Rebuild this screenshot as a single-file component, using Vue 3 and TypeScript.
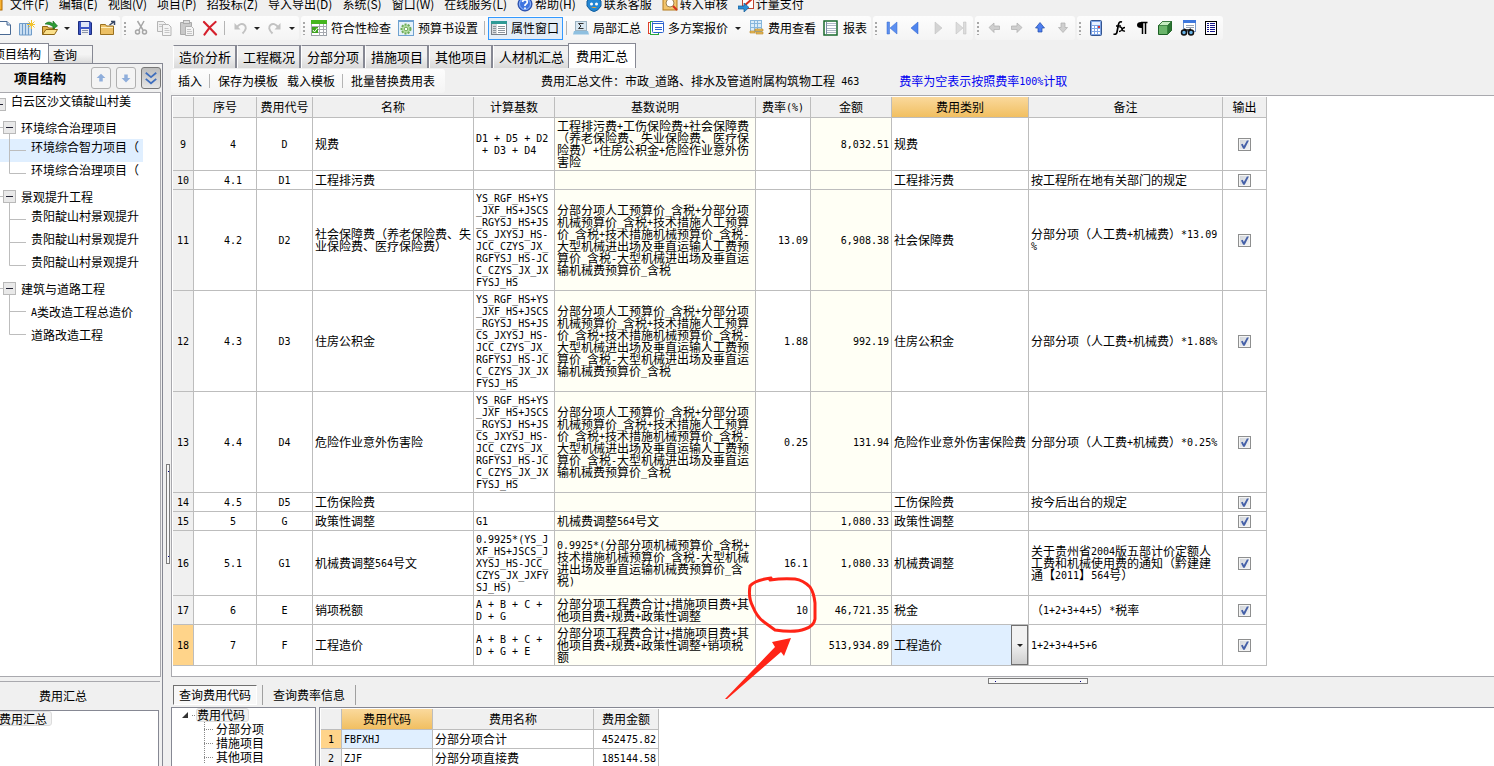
<script setup lang="ts">
import { h, ref } from 'vue'
import type { FunctionalComponent } from 'vue'

/* Splits a string so that ASCII runs take half the advance of a full-width character. */
const Mix: FunctionalComponent<{ text: string }> = (props) =>
  h(
    'span',
    { class: 'mix' },
    props.text
      .split(/([\x20-\x7e]+)/)
      .filter((part) => part.length > 0)
      .map((part) => (/^[\x20-\x7e]+$/.test(part) ? h('span', { class: 'half' }, part) : part)),
  )
Mix.props = ['text']

interface Tool {
  kind: 'icon' | 'text' | 'drop' | 'sep'
  icon?: string
  label?: string
  active?: boolean
}
interface CostRow {
  no: number
  serial: string
  code: string
  name: string
  base: string
  desc: string
  rate: string
  amount: string
  type: string
  note: string
  output: boolean
}

const icons: Record<string, string> = {
  app: '<rect x="1" y="1" width="13" height="13" fill="#f7b233" stroke="#b36b00"/>',
  page: '<path d="M3 1.500h8l3.500 3.500v9.500H3z" fill="#fff" stroke="#4a6a94"/><path d="M11 1.500V5h3.500" fill="#cfe0f5" stroke="#4a6a94"/>',
  notes:
    '<path d="M.5 3.500h12v11.500h-12z" fill="#c9def2" stroke="#6f9cc9"/><path d="M3.500 3v12M6.500 3v12M9.500 3v12" stroke="#6f9cc9"/><path d="M12.500 0v9M8 4.500h9M9.500 1.500l6 6M15.500 1.500l-6 6" stroke="#f3c32c"/>',
  open: '<path d="M.5 14.500V6.500h5l1 1.500h6v2" fill="#e3b14a" stroke="#8d6415"/><path d="M.5 14.500L4 9.500h11.500l-3 5z" fill="#fbe08b" stroke="#8d6415"/><path d="M3 4q4-4 8 0V1l4.500 5L11 9V6.500Q7 3.500 3 4z" fill="#2f9e38" stroke="#12661b" stroke-width=".6"/>',
  save: '<path d="M1.500 1.500h11.500l1.500 1.500v11.500h-13z" fill="#3b55c4" stroke="#1c2d80"/><rect x="4" y="2" width="8" height="5" fill="#dfe6f7"/><rect x="4" y="9" width="8" height="6" fill="#f0f0f0"/><path d="M5 10.500h6M5 12.500h6" stroke="#8a94ad"/>',
  folder:
    '<path d="M.5 14.500v-10h5l1 1.500h7v8.500z" fill="#ecc065" stroke="#9a7120"/><path d="M1 7.500h12" stroke="#fff0be"/><path d="M9.500 5l5-3.500M11 1.500h3.500V5" fill="none" stroke="#384866" stroke-width="1.500"/>',
  cut: '<path d="M4.500 1l5.500 9M11 1L6 10" stroke="#a6a6a6" stroke-width="1.500"/><circle cx="4.500" cy="12" r="2" fill="none" stroke="#a6a6a6" stroke-width="1.500"/><circle cx="11.500" cy="12" r="2" fill="none" stroke="#a6a6a6" stroke-width="1.500"/>',
  copy: '<path d="M1.500 1.500h6l2 2v8h-8z" fill="#f0f0f0" stroke="#b5b5b5"/><path d="M6.500 4.500h6l2.500 2.500v8.500H6.500z" fill="#f5f5f5" stroke="#b5b5b5"/><path d="M8.500 8.500h4M8.500 10.500h5M8.500 12.500h5M3 4.500h3M3 6.500h3" stroke="#c6c6c6"/>',
  paste:
    '<path d="M1.500 2.500h11v12h-11z" fill="#c9c9c9" stroke="#aaa"/><rect x="4.500" y=".5" width="6" height="3" fill="#ddd" stroke="#aaa"/><path d="M6.500 6.500h6l2 2v7h-8z" fill="#f5f5f5" stroke="#b0b0b0"/><path d="M8 9.500h4M8 11.500h5M8 13.500h5" stroke="#c6c6c6"/>',
  del: '<path d="M2 2q6 6 12 12.500M13.500 2Q7 7 2.500 14.500" fill="none" stroke="#d5202c" stroke-width="2.200" stroke-linecap="round"/>',
  undo: '<path d="M4.500 7.500Q9 2 12.500 5t-2 8.500" fill="none" stroke="#c2c2c2" stroke-width="2"/><path d="M2.500 3v6.500h6z" fill="#c2c2c2"/>',
  redo: '<path d="M11.500 7.500Q7 2 3.500 5t2 8.500" fill="none" stroke="#c2c2c2" stroke-width="2"/><path d="M13.500 3v6.500h-6z" fill="#c2c2c2"/>',
  check:
    '<rect x=".5" y=".5" width="15" height="15" fill="#fff" stroke="#9aa0a6"/><rect x="0" y="0" width="16" height="4" fill="#45b51f"/><path d="M0 6.500h16M0 9.500h16M0 12.500h16M8.500 4v12M12.500 4v12" stroke="#a7aab0"/><rect x="1" y="7" width="6" height="6" fill="#3fa41f"/><path d="M2 10l1.500 2L6.500 8" fill="none" stroke="#fff"/>',
  gear: '<rect x=".5" y=".5" width="15" height="15" fill="#e5f2fb" stroke="#6fa2d0"/><path d="M0 1.500h16" stroke="#6fa2d0"/><circle cx="8" cy="9" r="4.500" fill="#b9dfa8" stroke="#6cab57" stroke-width="2" stroke-dasharray="2 1.200"/><circle cx="8" cy="9" r="1.800" fill="#fff" stroke="#6cab57"/>',
  props:
    '<rect x=".5" y="1.500" width="15" height="13" fill="#fff" stroke="#7a8087"/><path d="M0 2.500h16" stroke="#2e9a96" stroke-width="3"/><rect x="1" y="4" width="5" height="10" fill="#d5d8db"/><path d="M2 6.500h3M2 8.500h3M2 10.500h3M2 12.500h3M7 6.500h7M7 8.500h7M7 10.500h7M7 12.500h7" stroke="#8b949c"/>',
  sigma:
    '<rect x="2.500" y="1.500" width="11" height="9" fill="#d7e6f0" stroke="#9cb3c2"/><path d="M10.500 3.500h-5l2.500 2.500-2.500 2.500h5" fill="none" stroke="#333"/><path d="M1 11h14l1 3.500H0z" fill="#8fc0e0"/>',
  multi:
    '<rect x=".5" y="2.500" width="6" height="11" fill="#fff" stroke="#e0402b"/><rect x="2.500" y="1.500" width="8" height="13" fill="#fff" stroke="#2ca73b"/><rect x="4.500" y="1.500" width="11" height="11" rx="1" fill="#fff" stroke="#2b62cf"/><path d="M5 3.500h10M7 7.500h7M7 9.500h7" stroke="#2b62cf"/>',
  cost: '<rect x="2.500" y=".5" width="11" height="11" fill="#d9ecf8" stroke="#86b6dc"/><path d="M3 3.500h10M3 7.500h10M6.500 1v10M9.500 1v10" stroke="#86b6dc"/><path d="M7 9h8v2H7zM8 12h7v2H8zM2 11h5v2H2z" fill="#e9bd5c" stroke="#b98827" stroke-width=".6"/>',
  report:
    '<rect x="1" y="1" width="13" height="14" fill="#fff" stroke="#1a6a2e" stroke-width="1.500"/><path d="M4 3.500h9M4 5.500h9M4 8.500h9M4 10.500h9M4 12.500h9" stroke="#aeb8c6"/><path d="M3.500 2v12" stroke="#7c8ea8"/>',
  first: '<path d="M3 2h2.500v12H3zM13 2v12L6 8z" fill="#5c8ff0" stroke="#3568cc" stroke-width=".5"/>',
  prev: '<path d="M11 2v12L4 8z" fill="#4f85ee" stroke="#2b5fc9" stroke-width=".5"/>',
  next: '<path d="M5 2v12l7-6z" fill="#d4d4d4" stroke="#bdbdbd" stroke-width=".5"/>',
  last: '<path d="M10.500 2H13v12h-2.500zM3 2v12l7-6z" fill="#dcdcdc" stroke="#bdbdbd" stroke-width=".5"/>',
  left: '<path d="M3 7.500L8 3v3h5.500v3.500H8v3z" fill="#cfcfcf" stroke="#adadad" stroke-width=".7"/>',
  right: '<path d="M13 7.500L8 3v3H2.500v3.500H8v3z" fill="#cfcfcf" stroke="#adadad" stroke-width=".7"/>',
  up: '<path d="M8 2.500L12.500 8H10v4H6V8H3.500z" fill="#4e7ff0" stroke="#1f4aa8" stroke-width=".7"/>',
  down: '<path d="M8 12.500L12.500 7.500H10V3H6v4.500H3.500z" fill="#cfcfcf" stroke="#adadad" stroke-width=".7"/>',
  calc: '<rect x="2.500" y=".5" width="11" height="15" rx="1" fill="#7fa5e6" stroke="#35548e"/><rect x="4" y="2" width="8" height="3" fill="#e8f0ff"/><path d="M4 7h8M4 10h8M4 13h8" stroke="#fff" stroke-width="2" stroke-dasharray="2 1"/><path d="M10 7h2" stroke="#d33" stroke-width="2"/>',
  fx: '<path d="M11 2Q8 1 7.500 4.500L6 12q-.5 3-3.500 2M5 6h5" fill="none" stroke="#000" stroke-width="1.700"/><path d="M8.500 7.500q2-1 2.500 1.500t3 2M14 7.500q-2 0-3 2t-3 2" fill="none" stroke="#000" stroke-width="1.300"/>',
  para: '<path d="M7 2.500h6.500M8.500 2.500v11.500M11.500 2.500v11.500" stroke="#000" stroke-width="1.500"/><path d="M9 2H7Q3 2 3 5t4 3h2z" fill="#000"/>',
  cube: '<path d="M1.500 5.500l4-4h9v9l-4 4h-9z" fill="#3f9a45" stroke="#1c5f24"/><path d="M1.500 5.500l4-4h9l-4 4z" fill="#c5ecc0" stroke="#1c5f24" stroke-width=".6"/><path d="M10.500 5.500l4-4v9l-4 4z" fill="#2c7433"/><path d="M2 6h8v8H2z" fill="#6bb56b"/>',
  find: '<rect x="3.500" y=".5" width="12" height="11" fill="#fff" stroke="#7a9ac8"/><path d="M3 1.500h13" stroke="#3e78dd" stroke-width="3"/><path d="M6 5.500h8M6 7.500h8" stroke="#9aa6b5"/><circle cx="4" cy="12.500" r="2.500" fill="#67b4e8" stroke="#111" stroke-width="1.500"/><circle cx="11" cy="12.500" r="2.500" fill="#67b4e8" stroke="#111" stroke-width="1.500"/><path d="M4 9l2 1h3l2-1" fill="none" stroke="#111" stroke-width="1.500"/>',
  list: '<rect x="2.500" y="1.500" width="11" height="13" fill="#fff" stroke="#000"/><path d="M4 3.500h2M4 5.500h2M4 7.500h2M4 9.500h2M4 11.500h2M7 3.500h5M7 5.500h5M7 7.500h5M7 9.500h5M7 11.500h5" stroke="#15158a"/>',
  help: '<circle cx="8" cy="8" r="7" fill="#3f74e0" stroke="#1c3f9c"/><circle cx="8" cy="8" r="5.500" fill="none" stroke="#a8c5ff" stroke-width=".8"/><path d="M5.500 6Q6 3.500 8.500 4t1.500 3L8 9v1M8 11.500V13" fill="none" stroke="#fff" stroke-width="1.700"/>',
  service:
    '<path d="M1 5q7-8 14 0v5q-7 11-14 0z" fill="#2386d4" stroke="#125f9e"/><circle cx="5.500" cy="8" r="1.500" fill="#fff"/><circle cx="10.500" cy="8" r="1.500" fill="#fff"/><path d="M5 11q3 2 6 0z" fill="#f6a623"/>',
  audit:
    '<rect x="1" y="2" width="14" height="12" fill="#f2c46c" stroke="#b37a1c"/><circle cx="8" cy="7" r="4" fill="#fff" stroke="#9d8453"/><path d="M11 10l4 4" stroke="#d5301e" stroke-width="2"/>',
  pay: '<rect x="4.500" y="1.500" width="11" height="11" fill="#fff" stroke="#c04430"/><path d="M6 10l8-7" stroke="#d5301e" stroke-width="2"/><path d="M0 10h6V7l5 4.500L6 16v-3H0z" fill="#2d8fd6" stroke="#155a94" stroke-width=".7"/>',
}

const menus: { label: string; icon?: string }[] = [
  { label: '文件(F)' },
  { label: '编辑(E)' },
  { label: '视图(V)' },
  { label: '项目(P)' },
  { label: '招投标(Z)' },
  { label: '导入导出(D)' },
  { label: '系统(S)' },
  { label: '窗口(W)' },
  { label: '在线服务(L)' },
  { label: '帮助(H)', icon: 'help' },
  { label: '联系客服', icon: 'service' },
  { label: '转入审核', icon: 'audit' },
  { label: '计量支付', icon: 'pay' },
]

const ic = (icon: string, label: string): Tool => ({ kind: 'icon', icon, label })
const tx = (icon: string, label: string, active = false): Tool => ({ kind: 'text', icon, label, active })
const drop = (label: string): Tool => ({ kind: 'drop', label })
const sep: Tool = { kind: 'sep' }

const toolGroups: { wide?: boolean; tools: Tool[] }[] = [
  { tools: [ic('page', '新建'), ic('notes', '新建项目'), ic('open', '打开'), drop('打开选项'), ic('save', '保存'), ic('folder', '另存')] },
  { tools: [ic('cut', '剪切'), ic('copy', '复制'), ic('paste', '粘贴'), ic('del', '删除'), sep, ic('undo', '撤销'), drop('撤销选项'), ic('redo', '重做'), drop('重做选项')] },
  {
    wide: true,
    tools: [tx('check', '符合性检查'), tx('gear', '预算书设置'), sep, tx('props', '属性窗口', true), sep, tx('sigma', '局部汇总'), tx('multi', '多方案报价'), drop('报价选项'), tx('cost', '费用查看'), tx('report', '报表')],
  },
  { tools: [ic('first', '首条'), ic('prev', '上一条'), ic('next', '下一条'), ic('last', '末条')] },
  { tools: [ic('left', '左移'), ic('right', '右移'), ic('up', '上移'), ic('down', '下移')] },
  { tools: [ic('calc', '计算器'), ic('fx', '函数'), ic('para', '段落'), ic('cube', '模型'), ic('find', '查找'), ic('list', '清单')] },
]

const tree: { level: 0 | 1 | 2; text: string; high?: boolean; last?: boolean; selected?: boolean }[] = [
  { level: 0, text: '白云区沙文镇靛山村美', high: true },
  { level: 1, text: '环境综合治理项目' },
  { level: 2, text: '环境综合智力项目（', high: true, selected: true },
  { level: 2, text: '环境综合治理项目（', high: true, last: true },
  { level: 1, text: '景观提升工程' },
  { level: 2, text: '贵阳靛山村景观提升', high: true },
  { level: 2, text: '贵阳靛山村景观提升', high: true },
  { level: 2, text: '贵阳靛山村景观提升', high: true, last: true },
  { level: 1, text: '建筑与道路工程' },
  { level: 2, text: 'A类改造工程总造价' },
  { level: 2, text: '道路改造工程', last: true },
]

const mainTabs = ['造价分析', '工程概况', '分部分项', '措施项目', '其他项目', '人材机汇总', '费用汇总']
const currentTab = ref('费用汇总')

const headers = ['', '序号', '费用代号', '名称', '计算基数', '基数说明', '费率(%)', '金额', '费用类别', '备注', '输出']

const formula = 'YS_RGF_HS+YS\n_JXF_HS+JSCS\n_RGYSJ_HS+JS\nCS_JXYSJ_HS-\nJCC_CZYS_JX_\nRGFYSJ_HS-JC\nC_CZYS_JX_JX\nFYSJ_HS'
const formulaDesc =
  '分部分项人工预算价_含税+分部分项\n机械预算价_含税+技术措施人工预算\n价_含税+技术措施机械预算价_含税-\n大型机械进出场及垂直运输人工费预\n算价_含税-大型机械进出场及垂直运\n输机械费预算价_含税'

const row = (
  no: number, serial: string, code: string, name: string, base: string, desc: string,
  rate: string, amount: string, type: string, note: string,
): CostRow => ({ no, serial, code, name, base, desc, rate, amount, type, note, output: true })

const rows = ref<CostRow[]>([
  row(9, '4', 'D', '规费', 'D1 + D5 + D2\n + D3 + D4', '工程排污费+工伤保险费+社会保障费\n（养老保险费、失业保险费、医疗保\n险费）+住房公积金+危险作业意外伤\n害险', '', '8,032.51', '规费', ''),
  row(10, '4.1', 'D1', '工程排污费', '', '', '', '', '工程排污费', '按工程所在地有关部门的规定'),
  row(11, '4.2', 'D2', '社会保障费（养老保险费、失\n业保险费、医疗保险费）', formula, formulaDesc, '13.09', '6,908.38', '社会保障费', '分部分项（人工费+机械费）*13.09\n%'),
  row(12, '4.3', 'D3', '住房公积金', formula, formulaDesc, '1.88', '992.19', '住房公积金', '分部分项（人工费+机械费）*1.88%'),
  row(13, '4.4', 'D4', '危险作业意外伤害险', formula, formulaDesc, '0.25', '131.94', '危险作业意外伤害保险费', '分部分项（人工费+机械费）*0.25%'),
  row(14, '4.5', 'D5', '工伤保险费', '', '', '', '', '工伤保险费', '按今后出台的规定'),
  row(15, '5', 'G', '政策性调整', 'G1', '机械费调整564号文', '', '1,080.33', '政策性调整', ''),
  row(16, '5.1', 'G1', '机械费调整564号文', '0.9925*(YS_J\nXF_HS+JSCS_J\nXYSJ_HS-JCC_\nCZYS_JX_JXFY\nSJ_HS)', '0.9925*(分部分项机械预算价_含税+\n技术措施机械预算价_含税-大型机械\n进出场及垂直运输机械费预算价_含\n税)', '16.1', '1,080.33', '机械费调整', '关于贵州省2004版五部计价定额人\n工费和机械使用费的通知（黔建建\n通【2011】564号）'),
  row(17, '6', 'E', '销项税额', 'A + B + C +\nD + G', '分部分项工程费合计+措施项目费+其\n他项目费+规费+政策性调整', '10', '46,721.35', '税金', '（1+2+3+4+5）*税率'),
  row(18, '7', 'F', '工程造价', 'A + B + C +\nD + G + E', '分部分项工程费合计+措施项目费+其\n他项目费+规费+政策性调整+销项税\n额', '', '513,934.89', '工程造价', '1+2+3+4+5+6'),
])
const selectedNo = 18

const codes = [
  { no: 1, code: 'FBFXHJ', name: '分部分项合计', amount: '452475.82' },
  { no: 2, code: 'ZJF', name: '分部分项直接费', amount: '185144.58' },
]
</script>

<template>
  <div class="app">
    <nav class="menu">
      <svg class="ico app-ico" viewBox="0 0 16 16" v-html="icons.app" />
      <button v-for="m in menus" :key="m.label" type="button">
        <svg v-if="m.icon" class="ico" viewBox="0 0 16 16" v-html="icons[m.icon]" />
        <span>{{ m.label }}</span>
      </button>
    </nav>

    <div class="toolbar">
      <div v-for="(group, gi) in toolGroups" :key="gi" :class="['group', { wide: group.wide }]">
        <span v-if="gi > 0" class="grip" />
        <template v-for="(t, ti) in group.tools" :key="ti">
          <span v-if="t.kind === 'sep'" class="sep" />
          <button v-else-if="t.kind === 'drop'" type="button" class="drop" :aria-label="t.label" />
          <button v-else type="button" :class="[t.kind, { active: t.active }]" :aria-label="t.label">
            <svg class="ico" viewBox="0 0 16 16" v-html="icons[t.icon ?? '']" />
            <span v-if="t.kind === 'text'">{{ t.label }}</span>
          </button>
        </template>
      </div>
    </div>

    <div class="body">
      <aside class="left">
        <div class="side-tabs">
          <button type="button" class="on">项目结构</button>
          <button type="button">查询</button>
        </div>
        <div class="side-main">
          <header class="side-head">
            <strong>项目结构</strong>
            <button type="button" aria-label="上移"><svg viewBox="0 0 16 16"><path d="M8 3l5 5h-3v4H6V8H3z" fill="#8faedb" /></svg></button>
            <button type="button" aria-label="下移"><svg viewBox="0 0 16 16"><path d="M8 13L3 8h3V4h4v4h3z" fill="#8faedb" /></svg></button>
            <button type="button" class="dark" aria-label="全部展开"><svg viewBox="0 0 16 16"><path d="M2 2l6 5 6-5M2 9l6 5 6-5" fill="none" stroke="#3f6ebd" stroke-width="2" /></svg></button>
          </header>
          <ul class="tree">
            <li v-for="(n, i) in tree" :key="i" :class="{ high: n.high, selected: n.selected }">
              <svg v-if="n.level === 2" width="29" height="23" viewBox="0 0 29 23">
                <path :d="n.last ? 'M9.500 0V11.500H26' : 'M9.500 0V23M9.500 11.500H26'" fill="none" stroke="#bdbdbd" />
              </svg>
              <svg v-else-if="n.level === 1" width="19" height="23" viewBox="0 0 19 23">
                <path d="M0 11.500H3M9.500 18V23" stroke="#bdbdbd" />
                <rect x="3.500" y="5.500" width="12" height="12" fill="#e9e9e9" stroke="#b9b9b9" />
                <path d="M6 11.500h7" stroke="#223" />
              </svg>
              <svg v-else width="9" height="23" viewBox="0 0 9 23">
                <rect x="-6.500" y="5.500" width="12" height="12" fill="#e9e9e9" stroke="#b9b9b9" />
                <path d="M-4 11.500h7" stroke="#223" />
              </svg>
              <Mix :text="n.text" />
            </li>
          </ul>
        </div>
        <div class="side-bottom">
          <h2>费用汇总</h2>
          <div class="side-list"><button type="button">费用汇总</button></div>
        </div>
      </aside>

      <div class="vsplit"><span /></div>

      <main class="right">
        <div class="tabs">
          <button v-for="t in mainTabs" :key="t" type="button" :class="{ on: t === currentTab }" @click="currentTab = t">{{ t }}</button>
        </div>
        <div class="subbar">
          <div class="sub-actions">
            <button type="button">插入</button>
            <span class="sep" />
            <button type="button">保存为模板</button>
            <button type="button">载入模板</button>
            <span class="sep" />
            <button type="button">批量替换费用表</button>
          </div>
          <Mix class="file" text="费用汇总文件：市政_道路、排水及管道附属构筑物工程 463" />
          <Mix class="hint" text="费率为空表示按照费率100%计取" />
        </div>

        <section class="grid-panel">
          <table class="grid">
            <colgroup>
              <col v-for="n in 11" :key="n" :class="'c' + n" />
            </colgroup>
            <thead>
              <tr>
                <th v-for="(t, i) in headers" :key="i" :class="{ hot: i === 8 }"><Mix :text="t" /></th>
              </tr>
            </thead>
            <tbody>
              <tr v-for="r in rows" :key="r.no">
                <th :class="{ current: r.no === selectedNo }"><Mix :text="String(r.no)" /></th>
                <td class="center serial"><Mix :text="r.serial" /></td>
                <td class="center"><Mix :text="r.code" /></td>
                <td><Mix :text="r.name" /></td>
                <td><Mix :text="r.base" /></td>
                <td class="cream"><Mix :text="r.desc" /></td>
                <td class="num"><Mix :text="r.rate" /></td>
                <td class="num cream"><Mix :text="r.amount" /></td>
                <td v-if="r.no === selectedNo" class="combo-cell">
                  <div class="combo">
                    <select v-model="r.type" aria-label="费用类别">
                      <option>工程造价</option>
                      <option>税金</option>
                    </select>
                    <span class="combo-btn" />
                  </div>
                </td>
                <td v-else><Mix :text="r.type" /></td>
                <td><Mix :text="r.note" /></td>
                <td class="center"><input v-model="r.output" type="checkbox" :aria-label="'输出 ' + r.name" /></td>
              </tr>
            </tbody>
          </table>
        </section>

        <div class="hsplit"><span /></div>

        <div class="lower-tabs">
          <button type="button" class="on">查询费用代码</button>
          <button type="button">查询费率信息</button>
        </div>
        <div class="lower">
          <div class="code-tree">
            <div class="code-root">
              <svg width="24" height="14" viewBox="0 0 24 14"><path d="M16 4v6h-6z" fill="#333" /><path d="M20 7.500h4" stroke="#888" stroke-dasharray="1 1" /></svg>
              <button type="button">费用代码</button>
            </div>
            <div v-for="t in ['分部分项', '措施项目', '其他项目']" :key="t" class="code-leaf">
              <svg width="10" height="14" viewBox="0 0 10 14"><path d="M.5 0V14M0 7.500H9" stroke="#888" stroke-dasharray="1 1" /></svg>
              <span>{{ t }}</span>
            </div>
          </div>
          <div class="code-grid">
            <table class="grid">
              <colgroup><col class="c1" /><col class="k2" /><col class="k3" /><col class="k4" /></colgroup>
              <thead>
                <tr><th /><th class="hot">费用代码</th><th>费用名称</th><th>费用金额</th></tr>
              </thead>
              <tbody>
                <tr v-for="c in codes" :key="c.no">
                  <th :class="{ current: c.no === 1 }"><Mix :text="String(c.no)" /></th>
                  <td :class="{ picked: c.no === 1 }"><Mix :text="c.code" /></td>
                  <td><Mix :text="c.name" /></td>
                  <td class="num"><Mix :text="c.amount" /></td>
                </tr>
              </tbody>
            </table>
          </div>
        </div>
      </main>
    </div>

    <svg class="marks" width="100" height="130" viewBox="0 0 100 130" aria-hidden="true">
      <path d="M30 7Q14 9 9 15Q7 27 12 36Q16 46 23 51L34 59Q54 62 64 58Q73 55 74 48V32Q73 22 69 16Q62 9 54 8Q42 7 29 9" fill="none" stroke="#ff2416" stroke-width="3" stroke-linecap="round" stroke-linejoin="round" />
      <path d="M-16 128L34 76L31 71L50 67L43 85L40 81L-14 128Z" fill="#ff2416" />
    </svg>
  </div>
</template>

<style>
html,
body {
  background: #f0f0f0;
}
.mix {
  white-space: pre;
}
.mix .half {
  font-family: 'DejaVu Sans Mono', 'Liberation Mono', monospace;
  font-size: 10px;
  line-height: 0;
  vertical-align: 1px;
}
</style>

<style scoped>
.app {
  position: relative;
  display: flex;
  flex-direction: column;
  height: 100vh;
  overflow: hidden;
  background: #f0f0f0;
  color: #000;
  font: 12px/12px 'Noto Sans CJK SC', sans-serif;
}
.app * {
  box-sizing: border-box;
}
button,
select {
  margin: 0;
  padding: 0;
  border: 0;
  background: none;
  color: inherit;
  font: inherit;
  white-space: nowrap;
}
.ico {
  width: 16px;
  height: 16px;
  flex: none;
}

/* menu */
.menu {
  display: flex;
  align-items: center;
  gap: 10px;
  height: 24px;
  margin: -8px 0 0 -12px;
  flex: none;
}
.menu .app-ico {
  margin-right: -4px;
}
.menu button {
  display: flex;
  align-items: center;
  gap: 2px;
}

/* toolbar */
.toolbar {
  display: flex;
  gap: 2px;
  height: 26px;
  margin-left: -8px;
  flex: none;
}
.group {
  display: flex;
  align-items: center;
  height: 24px;
  padding-right: 1px;
  border-radius: 3px;
  background: linear-gradient(#fdfdfd, #f4f4f4);
}
.group.wide {
  gap: 1px;
}
.grip {
  width: 7px;
  height: 14px;
  background: radial-gradient(circle at 3px 2px, #a8a8a8 1px, transparent 1px) 0 0 / 7px 4px;
}
.wide .grip {
  margin-right: -1px;
}
.sep {
  width: 1px;
  height: 14px;
  margin: 0 3px;
  background: #b4b4b4;
}
.wide .sep {
  margin: 0 2px;
}
.icon {
  display: flex;
  justify-content: center;
  width: 23px;
}
.text {
  display: flex;
  align-items: center;
  gap: 4px;
  height: 23px;
  padding: 0 3px;
}
.text.active {
  padding: 0 3px 0 2px;
  border: 1px solid #3399ff;
  background: #e4eef8;
}
.drop {
  display: flex;
  justify-content: center;
  width: 12px;
}
.drop::before,
.combo-btn::before {
  content: '';
  border: 3px solid transparent;
  border-top-color: #222;
  border-bottom: 0;
}

/* body */
.body {
  display: grid;
  grid-template-columns: 163px 8px minmax(0, 1fr);
  flex: 1;
  min-height: 0;
}
.left {
  display: flex;
  flex-direction: column;
  min-height: 0;
  overflow: hidden;
}
.side-tabs {
  display: flex;
  align-items: flex-end;
  height: 21px;
  flex: none;
}
.side-tabs button {
  width: 44px;
  height: 18px;
  padding-left: 4px;
  border: 1px solid #868893;
  border-width: 1px 1px 0 0;
  background: linear-gradient(#f4f4f4 50%, #dcdcdc);
  text-align: left;
}
.side-tabs .on {
  display: flex;
  justify-content: flex-end;
  align-items: center;
  width: 49px;
  height: 20px;
  padding: 0 7px 0 0;
  background: #fff;
}
.side-main {
  display: flex;
  flex-direction: column;
  flex: 1;
  min-height: 0;
  padding-right: 1px;
  border-top: 1px solid #868893;
  border-right: 1px solid #868893;
}
.side-head {
  display: flex;
  align-items: center;
  gap: 5px;
  height: 28px;
  flex: none;
}
.side-head strong {
  flex: 1;
  padding-left: 14px;
  font-size: 13px;
}
.side-head button {
  display: grid;
  place-items: center;
  width: 20px;
  height: 22px;
  border: 1px solid #b0b0b0;
  border-radius: 3px;
  background: #f4f4f4;
}
.side-head svg {
  width: 14px;
  height: 16px;
}
.side-head .dark {
  border-color: #777;
  background: linear-gradient(#bcbcbc, #e6e6e6);
}
.tree {
  flex: 1;
  min-height: 0;
  margin: 0;
  padding: 0;
  list-style: none;
  border: 1px solid #a9a9ae;
  border-left: 0;
  background: #fff;
}
.tree li {
  display: flex;
  align-items: center;
  gap: 2px;
  width: 143px;
  height: 23px;
}
.tree svg {
  flex: none;
}
.tree .high .mix {
  padding-bottom: 7px;
}
.tree .selected {
  background: #e0efff;
}
.side-bottom {
  display: flex;
  flex-direction: column;
  height: 89px;
  padding-top: 4px;
  flex: none;
  border-right: 1px solid #868893;
}
.side-bottom h2 {
  height: 29px;
  margin: 0 2px 0 0;
  padding-left: 39px;
  border-top: 1px solid #a9a9ae;
  font-size: 12px;
  font-weight: 400;
  line-height: 28px;
}
.side-list {
  flex: 1;
  margin-right: 3px;
  border: 1px solid #868893;
  border-width: 1px 1px 0 0;
  background: #fff;
}
.side-list button {
  height: 15px;
  margin-left: -2px;
  padding-right: 4px;
  border: 1px solid #dcdcdc;
  border-radius: 3px;
  background: #f1f1f1;
}
.vsplit {
  display: flex;
  align-items: flex-start;
  padding: 422px 0 0 3px;
}
.vsplit span,
.hsplit span {
  display: flex;
  justify-content: space-between;
  align-items: flex-end;
  padding: 6px 0;
  width: 4px;
  height: 100px;
  border: 1px solid #7c7c7c;
  background: #f8f8f8;
}
.vsplit span {
  flex-direction: column;
}
.vsplit span::before,
.vsplit span::after,
.hsplit span::before,
.hsplit span::after {
  content: '';
  width: 1px;
  height: 1px;
  background: #000080;
}

/* right */
.right {
  display: flex;
  flex-direction: column;
  min-width: 0;
  min-height: 0;
}
.tabs {
  display: flex;
  align-items: flex-end;
  height: 26px;
  padding-left: 2px;
  flex: none;
}
.tabs button {
  height: 23px;
  padding: 0 4px 0 5px;
  border: solid #868893;
  border-width: 1px 2px 0 0;
  border-left: 1px solid #fff;
  background: linear-gradient(#f0f0f0 45%, #d9d9d9);
  font-size: 13px;
}
.tabs .on {
  height: 25px;
  margin-left: -2px;
  padding: 0 7px;
  border: 1px solid #868893;
  border-bottom: 0;
  background: #fff;
}
.subbar {
  display: flex;
  align-items: center;
  height: 27px;
  padding-bottom: 1px;
  flex: none;
}
.sub-actions {
  display: flex;
  align-items: center;
  height: 24px;
  padding: 0 6px 0 2px;
  border-radius: 3px;
  background: linear-gradient(#fdfdfd, #f4f4f4);
}
.sub-actions button {
  padding: 0 4px 0 5px;
}
.file {
  margin-left: 96px;
}
.hint {
  margin-left: 40px;
  color: #0000f0;
}
.grid-panel {
  flex: 1;
  min-height: 0;
  padding: 1px 0 0 1px;
  border: 1px solid #a9a9ae;
  border-right: 0;
  background: #fff;
  overflow: hidden;
}
.grid {
  border-collapse: separate;
  border-spacing: 0;
  table-layout: fixed;
  width: 0;
}
.grid th,
.grid td {
  height: 19px;
  padding: 2px 0 2px 2px;
  border: solid #bdbdbd;
  border-width: 0 1px 1px 0;
  text-align: left;
  vertical-align: middle;
  white-space: nowrap;
  overflow: hidden;
}
.grid th {
  padding: 0;
  background: #f0f0f0;
  font-weight: 400;
  text-align: center;
}
.grid thead th {
  height: 21px;
}
.grid .hot {
  background: linear-gradient(#fad99c, #f1bf61);
}
.grid .current {
  background: #ffd48a;
}
.grid .picked {
  background: #e0efff;
}
.grid .center {
  padding: 0;
  text-align: center;
}
.grid .serial {
  padding-left: 16px;
}
.grid .num {
  padding: 2px 2px 2px 0;
  text-align: right;
}
.grid .cream {
  background: #fffff5;
}
.c1 { width: 21px; }
.c2 { width: 63px; }
.c3 { width: 56px; }
.c4 { width: 161px; }
.c5 { width: 81px; }
.c6 { width: 201px; }
.c7 { width: 55px; }
.c8 { width: 81px; }
.c9 { width: 137px; }
.c10 { width: 194px; }
.c11 { width: 44px; }
.k2 { width: 91px; }
.k3 { width: 161px; }
.k4 { width: 65px; }
.grid .combo-cell {
  padding: 0;
  background: #e0efff;
}
.combo {
  display: flex;
  height: 40px;
}
.combo select {
  flex: 1;
  min-width: 0;
  padding-left: 2px;
  appearance: none;
  border-radius: 0;
}
.combo-btn {
  display: grid;
  place-items: center;
  width: 17px;
  border: 1px solid #707070;
  background: linear-gradient(#f2f2f2 45%, #cfcfcf);
}
.grid input {
  appearance: none;
  display: inline-grid;
  width: 13px;
  height: 13px;
  margin: 0;
  border: 1px solid #8e8f8f;
  background: linear-gradient(135deg, #cfd3d8, #f6f6f6);
  box-shadow: inset 0 0 0 1px #f4f4f4;
  vertical-align: middle;
}
.grid input:checked::before {
  content: '';
  background: #4560a8;
  clip-path: polygon(18% 48%, 34% 42%, 44% 62%, 72% 12%, 90% 12%, 52% 88%, 38% 88%);
}
.hsplit {
  display: flex;
  justify-content: flex-start;
  height: 8px;
  padding: 1px 0 0 817px;
  flex: none;
}
.hsplit span {
  width: 100px;
  height: 6px;
  padding: 1px 6px;
}
.lower-tabs {
  display: flex;
  height: 22px;
  padding-left: 2px;
  flex: none;
}
.lower-tabs button {
  height: 20px;
  padding: 0 10px;
  border-right: 1px solid #a0a0a0;
}
.lower-tabs .on {
  margin-right: 5px;
  padding: 0 5px;
  border: 1px solid #fff;
  border-top-color: #707070;
  border-left-color: #707070;
  background: #f8f8f8;
}
.lower-tabs .on + button {
  border-left: 1px solid #a0a0a0;
}
.lower {
  display: grid;
  grid-template-columns: 145px minmax(0, 1fr);
  gap: 3px;
  height: 59px;
  flex: none;
  overflow: hidden;
}
.code-tree {
  border: 1px solid #868893;
  border-bottom: 0;
  background: #fff;
}
.code-root,
.code-leaf {
  display: flex;
  align-items: center;
  height: 14px;
}
.code-root button {
  height: 14px;
  padding: 0 3px 0 0;
  border: 1px solid #dcdcdc;
  border-radius: 3px;
  background: #f1f1f1;
}
.code-leaf {
  gap: 2px;
  padding-left: 32px;
}
.code-grid {
  padding: 1px 0 0 1px;
  border: 1px solid #868893;
  border-width: 1px 0 0 1px;
  background: #fff;
}

/* review marks laid over the grid */
.marks {
  position: absolute;
  left: 741px;
  top: 571px;
  overflow: visible;
  pointer-events: none;
}
</style>
